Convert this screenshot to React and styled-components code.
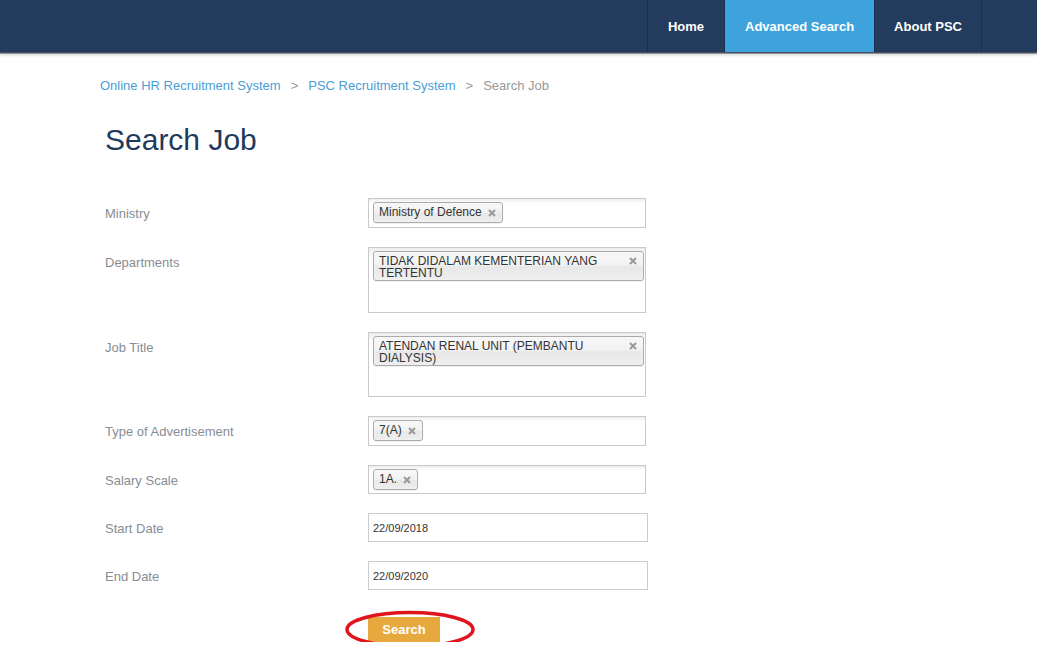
import React from "react";
import styled, { createGlobalStyle } from "styled-components";

const Global = createGlobalStyle`
  body {
    margin: 0;
    background: #fff;
    font-family: "Liberation Sans", Arial, sans-serif;
  }
`;

const Nav = styled.div`
  height: 52px;
  background: #233c5d;
  display: flex;
  justify-content: flex-end;
  padding-right: 55px;
  box-shadow: 0 1px 0 #4b505a, 0 2px 0 #8d9096, 0 3px 3px rgba(0, 0, 0, 0.18);
`;

const NavItem = styled.a`
  display: flex;
  align-items: center;
  padding: 0 ${(p) => p.pad || 20}px;
  font-size: 13px;
  font-weight: bold;
  color: #fff;
  border-left: 1px solid #1a304d;
  background: ${(p) => (p.active ? "#3ea3dc" : "transparent")};
  &:last-child {
    border-right: 1px solid #1a304d;
  }
`;

const Main = styled.div`
  padding: 24px 0 0 100px;
`;

const Crumbs = styled.div`
  font-size: 13px;
  line-height: 20px;
  color: #999;
`;

const Crumb = styled.a`
  color: ${(p) => (p.current ? "#999" : "#4a9ed6")};
`;

const Sep = styled.span`
  margin: 0 10px;
  color: #999;
`;

const Title = styled.h1`
  margin: 26px 0 0 5px;
  font-size: 30px;
  line-height: 36px;
  font-weight: normal;
  color: #1f3a5c;
`;

const Form = styled.div`
  margin: 40px 0 0 5px;
`;

const Row = styled.div`
  display: grid;
  grid-template-columns: 263px 1fr;
  margin-bottom: 19px;
`;

const Label = styled.div`
  padding-top: 8px;
  font-size: 13px;
  line-height: 16px;
  color: #888d92;
`;

const Box = styled.div`
  box-sizing: border-box;
  width: 278px;
  height: ${(p) => p.h || 30}px;
  border: 1px solid #c9c9c9;
  background: linear-gradient(to bottom, #eee 1%, #fff 15%);
  padding: 3px 1px 0 4px;
`;

const Chip = styled.div`
  display: ${(p) => (p.wide ? "flex" : "inline-flex")};
  align-items: ${(p) => (p.wide ? "flex-start" : "center")};
  justify-content: space-between;
  gap: 6px;
  padding: ${(p) => (p.wide ? "3px 6px 1px 5px" : "3px 6px 3px 5px")};
  border: 1px solid #aaa;
  border-radius: 3px;
  font-size: 12px;
  line-height: ${(p) => (p.wide ? "12px" : "13px")};
  color: #333;
  background: linear-gradient(to bottom, #f6f6f6 20%, #f0f0f0 50%, #e8e8e8 52%, #eee 100%);
  box-shadow: 0 0 2px #fff inset, 0 1px 0 rgba(0, 0, 0, 0.05);
`;

const Close = styled.svg`
  flex: none;
  margin-top: ${(p) => (p.wide ? "2px" : "0")};
`;

const DateInput = styled.div`
  box-sizing: border-box;
  width: 280px;
  height: 29px;
  border: 1px solid #ccc;
  padding: 0 4px;
  display: flex;
  align-items: center;
  font-size: 11px;
  color: #333;
`;

const Actions = styled.div`
  margin: 27px 0 0 263px;
  position: relative;
  width: 72px;
`;

const Button = styled.button`
  width: 72px;
  height: 25px;
  border: none;
  background: #e7a93e;
  color: #fff;
  font-family: inherit;
  font-size: 13px;
  font-weight: bold;
  padding: 0;
`;

const Ring = styled.svg`
  position: absolute;
  left: -23px;
  top: -7px;
  pointer-events: none;
`;

function X({ wide }) {
  return (
    <Close wide={wide} width="8" height="8" viewBox="0 0 8 8">
      <path d="M1 1L7 7M7 1L1 7" stroke="#9a9a9a" strokeWidth="2" />
    </Close>
  );
}

function Select({ h, wide, value }) {
  return (
    <Box h={h}>
      <Chip wide={wide}>
        <span>{value}</span>
        <X wide={wide} />
      </Chip>
    </Box>
  );
}

export default function App() {
  return (
    <>
      <Global />
      <Nav>
        <NavItem pad={20}>Home</NavItem>
        <NavItem active pad={20}>Advanced Search</NavItem>
        <NavItem pad={19}>About PSC</NavItem>
      </Nav>
      <Main>
        <Crumbs>
          <Crumb>Online HR Recruitment System</Crumb>
          <Sep>&gt;</Sep>
          <Crumb>PSC Recruitment System</Crumb>
          <Sep>&gt;</Sep>
          <Crumb current>Search Job</Crumb>
        </Crumbs>
        <Title>Search Job</Title>
        <Form>
          <Row>
            <Label>Ministry</Label>
            <Select value="Ministry of Defence" />
          </Row>
          <Row>
            <Label>Departments</Label>
            <Select h={66} wide value={<>TIDAK DIDALAM KEMENTERIAN YANG<br />TERTENTU</>} />
          </Row>
          <Row>
            <Label>Job Title</Label>
            <Select h={65} wide value={<>ATENDAN RENAL UNIT (PEMBANTU<br />DIALYSIS)</>} />
          </Row>
          <Row>
            <Label>Type of Advertisement</Label>
            <Select value="7(A)" />
          </Row>
          <Row>
            <Label>Salary Scale</Label>
            <Select h={29} value="1A." />
          </Row>
          <Row>
            <Label>Start Date</Label>
            <DateInput>22/09/2018</DateInput>
          </Row>
          <Row>
            <Label>End Date</Label>
            <DateInput>22/09/2020</DateInput>
          </Row>
          <Actions>
            <Button>Search</Button>
            <Ring width="132" height="40" viewBox="0 0 132 40">
              <ellipse cx="65" cy="19.5" rx="63" ry="17" fill="none" stroke="#e0141c" strokeWidth="3.5" />
            </Ring>
          </Actions>
        </Form>
      </Main>
    </>
  );
}
